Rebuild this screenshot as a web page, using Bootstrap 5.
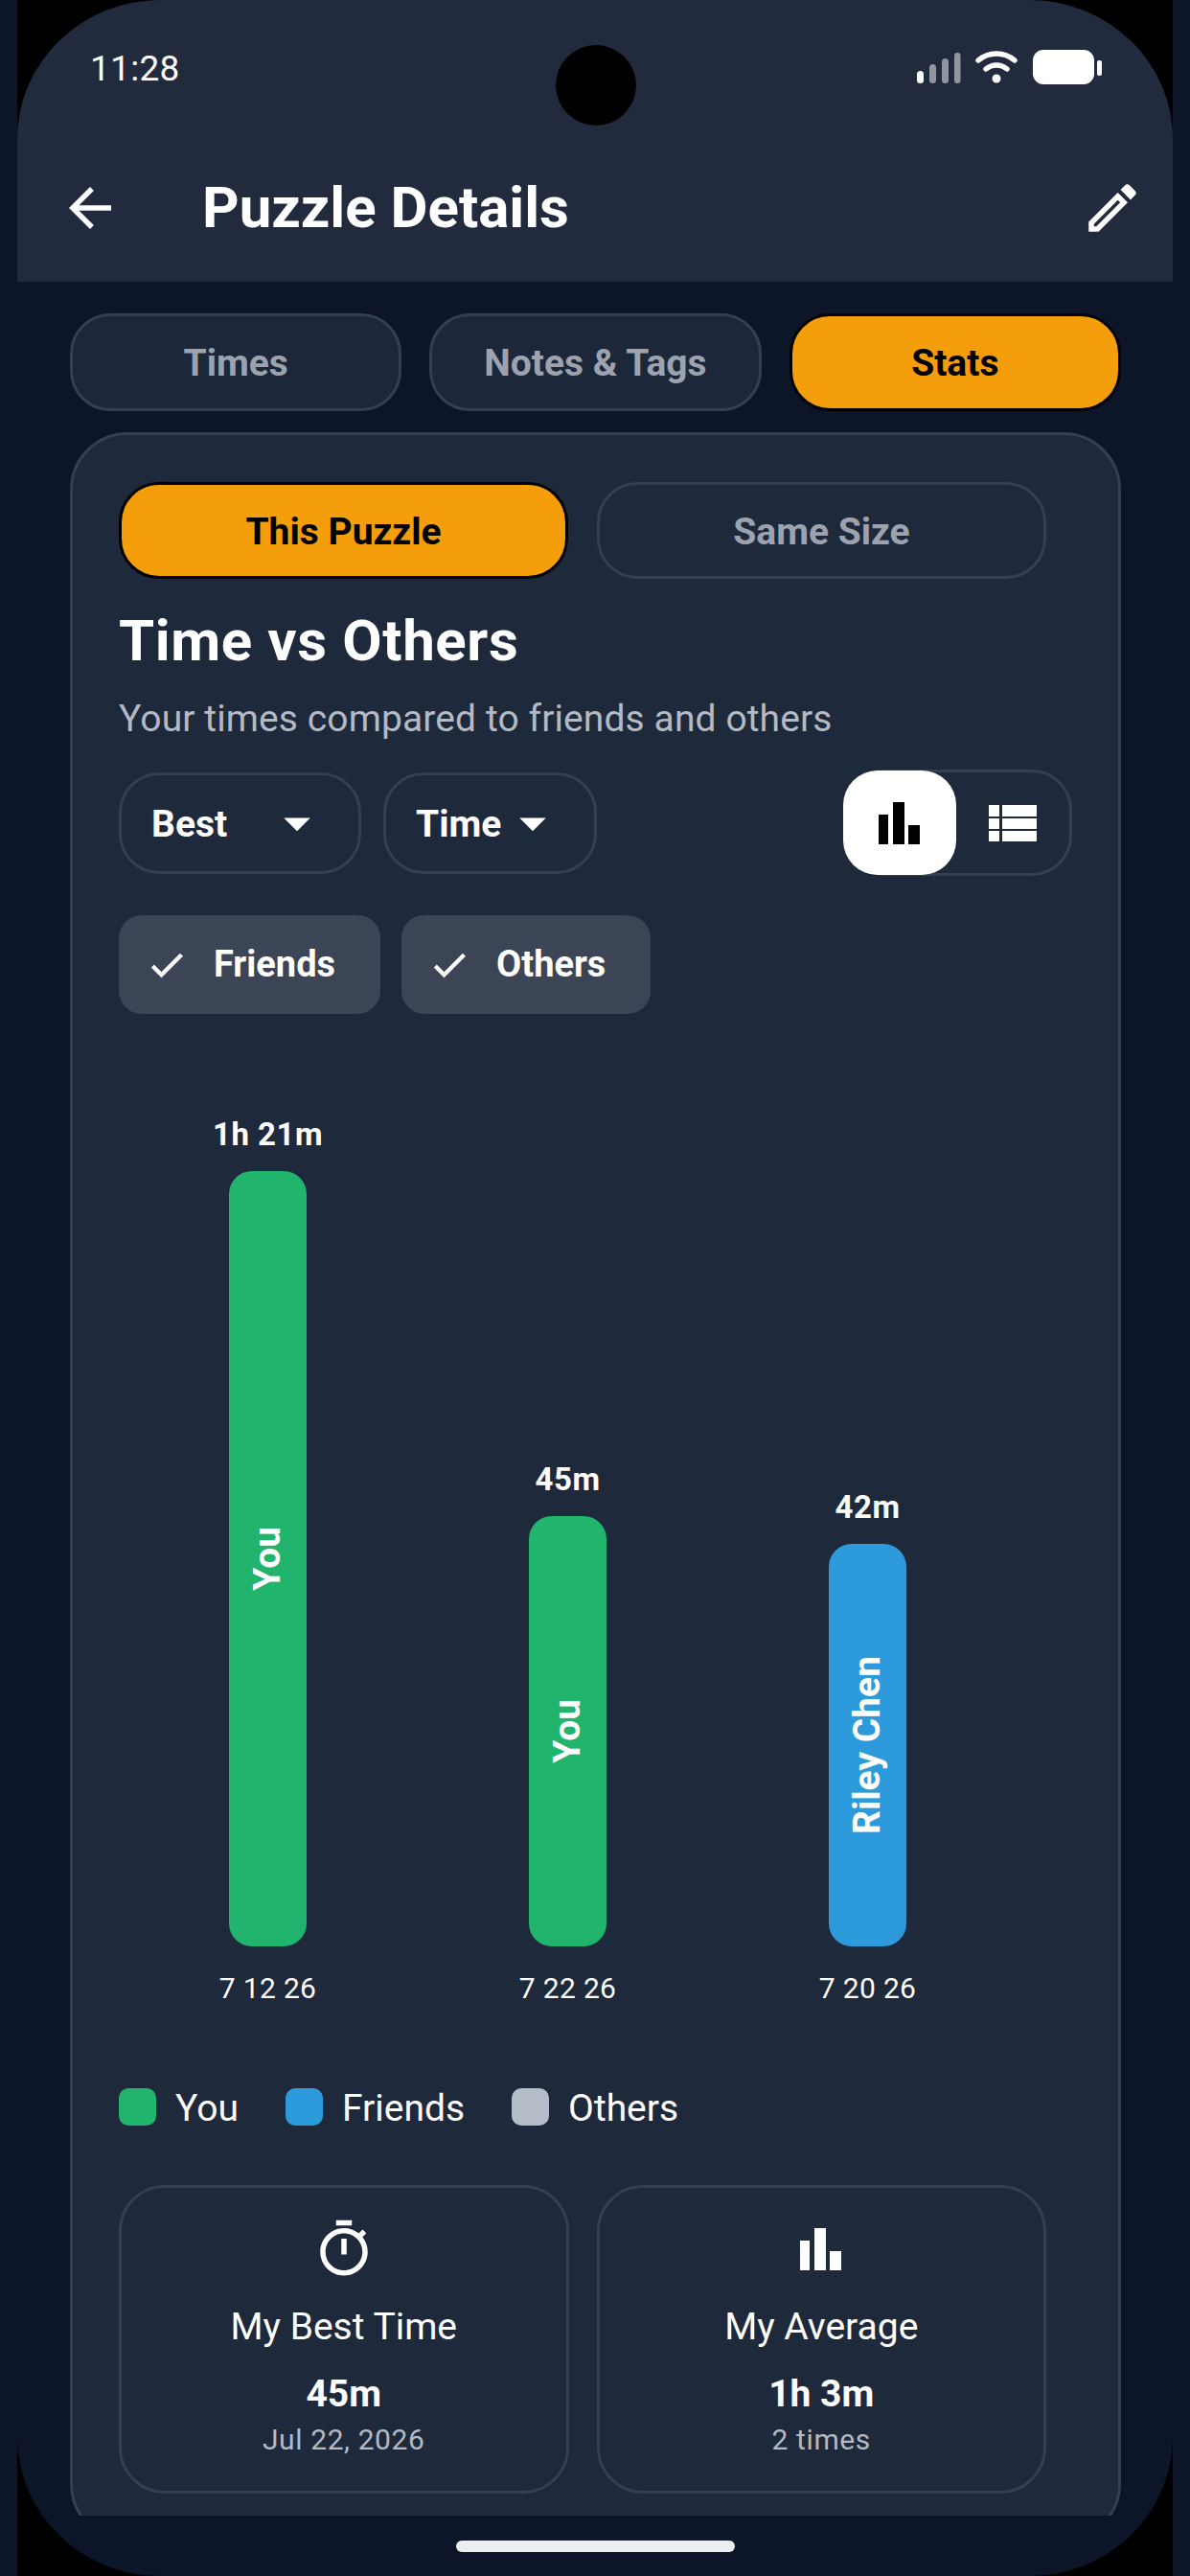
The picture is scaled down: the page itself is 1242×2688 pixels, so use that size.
<!DOCTYPE html>
<html lang="en">
<head>
    <meta charset="UTF-8">
    <title>Puzzle Details</title>
    <link href="https://cdn.jsdelivr.net/npm/bootstrap@5.3.3/dist/css/bootstrap.min.css" rel="stylesheet">
    <style>
        html, body { margin: 0; height: 2688px; background: #0d1629; overflow: hidden; }
        body { font-family: Roboto, "Liberation Sans", sans-serif; color: #fff; }
        svg { display: block; flex: none; fill: currentColor; }

        .phone-frame { margin: 0 18px; height: 2688px; background: #000; }
        .phone-screen { position: relative; height: 2688px; border-radius: 150px / 145px; overflow: hidden; background: #0d1629; }
        .camera-dot { position: absolute; top: 47px; left: 562px; width: 84px; height: 84px; border-radius: 50%; background: #000; }

        .top-header { height: 294px; background: #222a3d; }
        .status-row { height: 140px; padding: 0 74px 0 76px; }
        .clock { font-size: 37px; letter-spacing: .3px; padding-top: 3px; }
        .app-row { height: 154px; padding: 0 30px 0 43px; }
        .page-title { font-size: 60px; font-weight: 700; line-height: 70px; margin: 0 0 0 84px; }

        .content-clip { height: 2331px; overflow: hidden; padding: 33px 54px 0 55px; }
        .tab-row { gap: 29px; height: 102px; }
        .tab-pill, .seg-pill { font-size: 39px; font-weight: 700; border-radius: 42px; border: 3px solid #333f52; background: #1c2739; color: #9ca3af; padding: 3px 0 0; line-height: 1; }
        .tab-pill { flex: 1 1 0; }
        .tab-pill.is-active, .seg-pill.is-active { background: #f59e0b; border-color: #000; color: #000; }

        .stats-panel { margin-top: 22px; height: 2201px; border: 3px solid #333f52; border-radius: 60px; background: #1e293b; padding: 49px 48px 0; display: block; color: #fff; }
        .seg-row { width: 968px; gap: 30px; height: 101px; }
        .seg-pill { flex: 1 1 0; background: transparent; }
        .panel-title { font-size: 60px; font-weight: 700; line-height: 70px; margin: 30px 0 0; letter-spacing: .6px; }
        .panel-sub { font-size: 39px; line-height: 50px; margin: 21px 0 0; color: #b4bac4; letter-spacing: .1px; }

        .filter-row { margin-top: 28px; height: 111px; }
        .drop-pill { height: 106px; border: 3px solid #333f52; border-radius: 42px; padding: 0 31px; font-size: 39px; font-weight: 700; }
        .drop-text { padding-top: 3px; }
        .drop-gap { gap: 23px; }
        .best-label { min-width: 119px; }
        .view-switch { height: 111px; width: 239px; border: 3px solid #333f52; border-radius: 42px; }
        .view-on { width: 119px; height: 109px; margin: -2px 0 -2px -3px; background: #fff; color: #000; border-radius: 36px; }
        .view-off { width: 120px; }

        .chip-row { margin-top: 41px; gap: 22px; }
        .filter-chip { height: 103px; background: #3b4556; border-radius: 24px; padding: 0 47px 0 28px; font-size: 38px; font-weight: 700; gap: 27px; }
        .check-mark { stroke: currentColor; stroke-width: .5; }

        .chart-row { margin-top: 106px; margin-left: -1px; }
        .chart-col { flex: 0 0 313px; }
        .bar-value { font-size: 33px; font-weight: 700; line-height: 40px; margin-bottom: 18px; letter-spacing: .5px; }
        .chart-bar { width: 81px; border-radius: 24px; }
        .bar-you { background: #21b46d; }
        .bar-friend { background: #2d9bdb; }
        .bar-name { writing-mode: vertical-rl; transform: rotate(180deg); font-size: 39px; font-weight: 700; line-height: 1; }
        .bar-date { font-size: 30px; line-height: 40px; margin-top: 24px; letter-spacing: .35px; }

        .legend-row { margin-top: 84px; height: 39px; font-size: 39px; gap: 49px; }
        .legend-item { gap: 20px; }
        .legend-text { padding-top: 3px; }
        .legend-dot { width: 39px; height: 39px; border-radius: 10px; }
        .dot-others { background: #b4bcc8; }

        .summary-row { margin-top: 62px; width: 968px; gap: 29px; }
        .summary-box { flex: 1 1 0; height: 322px; border: 3px solid #333f52; border-radius: 48px; padding-top: 31px; }
        .summary-name { font-size: 39px; line-height: 50px; margin-top: 23px; }
        .summary-value { font-size: 39px; font-weight: 700; line-height: 46px; margin-top: 22px; }
        .summary-note { font-size: 30px; line-height: 38px; margin-top: 6px; color: #b4bac4; letter-spacing: .6px; }

        .bottom-strip { position: relative; height: 63px; background: #0d1629; }
        .home-bar { position: absolute; top: 26px; left: 458px; width: 291px; height: 12px; border-radius: 6px; background: #eceef0; }
    </style>
</head>
<body>
<div class="phone-frame">
    <div class="phone-screen">
        <div class="camera-dot"></div>

        <!-- status bar + app bar -->
        <div class="top-header">
            <div class="status-row d-flex align-items-center justify-content-between">
                <span class="clock">11:28</span>
                <svg width="193" height="36" viewBox="0 0 193 36">
                    <rect x="0" y="22" width="7" height="13" rx="3.5"/>
                    <g opacity=".5">
                        <rect x="13" y="15" width="7" height="20" rx="3.5"/>
                        <rect x="26" y="9" width="7" height="26" rx="3.5"/>
                        <rect x="39" y="3" width="6.5" height="32" rx="3.2"/>
                    </g>
                    <path d="M64 11a29 29 0 0 1 38 0" fill="none" stroke="#fff" stroke-width="5.5" stroke-linecap="round"/>
                    <path d="M72 20a17 17 0 0 1 22 0" fill="none" stroke="#fff" stroke-width="5.5" stroke-linecap="round"/>
                    <circle cx="83" cy="30" r="4.5"/>
                    <rect x="121" y="0" width="64" height="36" rx="11"/>
                    <rect x="188" y="11" width="5" height="16" rx="2"/>
                </svg>
            </div>
            <div class="app-row d-flex align-items-center">
                <svg width="66" height="66" viewBox="0 0 24 24"><path d="M20 11H7.83l5.59-5.59L12 4l-8 8 8 8 1.41-1.41L7.83 13H20v-2z"/></svg>
                <h1 class="page-title flex-grow-1">Puzzle Details</h1>
                <svg width="66" height="66" viewBox="0 0 24 24"><path d="M3 17.25V21h3.75L17.81 9.94l-3.75-3.75L3 17.25zM5.92 19H5v-.92l9.06-9.06.92.92L5.92 19zM20.71 5.63l-2.34-2.34c-.39-.39-1.02-.39-1.41 0l-1.83 1.83 3.75 3.75 1.83-1.83c.39-.39.39-1.02 0-1.41z"/></svg>
            </div>
        </div>

        <div class="content-clip">
            <div class="tab-row d-flex">
                <button class="btn tab-pill">Times</button>
                <button class="btn tab-pill">Notes &amp; Tags</button>
                <button class="btn tab-pill is-active">Stats</button>
            </div>

            <div class="card stats-panel">
                <div class="seg-row d-flex">
                    <button class="btn seg-pill is-active">This Puzzle</button>
                    <button class="btn seg-pill">Same Size</button>
                </div>

                <h2 class="panel-title">Time vs Others</h2>
                <p class="panel-sub">Your times compared to friends and others</p>

                <div class="filter-row d-flex align-items-center justify-content-between">
                    <div class="d-flex drop-gap">
                        <div class="drop-pill d-flex align-items-center">
                            <span class="drop-text best-label">Best</span>
                            <svg width="66" height="66" viewBox="0 0 24 24"><path d="M7 10l5 5 5-5z"/></svg>
                        </div>
                        <div class="drop-pill d-flex align-items-center">
                            <span class="drop-text">Time</span>
                            <svg width="66" height="66" viewBox="0 0 24 24"><path d="M7 10l5 5 5-5z"/></svg>
                        </div>
                    </div>
                    <div class="view-switch d-flex align-items-center">
                        <div class="view-on d-flex align-items-center justify-content-center">
                            <svg width="66" height="66" viewBox="0 0 66 66"><path d="M11 24h10v31H11zM26 11h12v44H26zM42 35h12v20H42z"/></svg>
                        </div>
                        <div class="view-off d-flex align-items-center justify-content-center">
                            <svg width="66" height="66" viewBox="0 0 66 66"><path d="M8 14h11v12H8zM22 14h36v12H22zM8 28h11v11H8zM22 28h36v11H22zM8 41h11v11H8zM22 41h36v11H22z"/></svg>
                        </div>
                    </div>
                </div>

                <div class="chip-row d-flex">
                    <div class="filter-chip d-flex align-items-center">
                        <svg class="check-mark" width="44" height="44" viewBox="0 0 24 24"><path d="M9 16.17L4.83 12l-1.42 1.41L9 19 21 7l-1.41-1.41z"/></svg>
                        <span>Friends</span>
                    </div>
                    <div class="filter-chip d-flex align-items-center">
                        <svg class="check-mark" width="44" height="44" viewBox="0 0 24 24"><path d="M9 16.17L4.83 12l-1.42 1.41L9 19 21 7l-1.41-1.41z"/></svg>
                        <span>Others</span>
                    </div>
                </div>

                <!-- chart: 10px per minute -->
                <div class="chart-row d-flex align-items-end">
                    <div class="chart-col d-flex flex-column align-items-center">
                        <div class="bar-value">1h 21m</div>
                        <div class="chart-bar bar-you d-flex align-items-center justify-content-center" style="height: 809px"><span class="bar-name">You</span></div>
                        <div class="bar-date">7 12 26</div>
                    </div>
                    <div class="chart-col d-flex flex-column align-items-center">
                        <div class="bar-value">45m</div>
                        <div class="chart-bar bar-you d-flex align-items-center justify-content-center" style="height: 449px"><span class="bar-name">You</span></div>
                        <div class="bar-date">7 22 26</div>
                    </div>
                    <div class="chart-col d-flex flex-column align-items-center">
                        <div class="bar-value">42m</div>
                        <div class="chart-bar bar-friend d-flex align-items-center justify-content-center" style="height: 420px"><span class="bar-name">Riley Chen</span></div>
                        <div class="bar-date">7 20 26</div>
                    </div>
                </div>

                <div class="legend-row d-flex align-items-center">
                    <div class="legend-item d-flex align-items-center"><span class="legend-dot bar-you"></span><span class="legend-text">You</span></div>
                    <div class="legend-item d-flex align-items-center"><span class="legend-dot bar-friend"></span><span class="legend-text">Friends</span></div>
                    <div class="legend-item d-flex align-items-center"><span class="legend-dot dot-others"></span><span class="legend-text">Others</span></div>
                </div>

                <div class="summary-row d-flex">
                    <div class="summary-box d-flex flex-column align-items-center">
                        <svg width="66" height="66" viewBox="0 0 24 24"><path d="M15 1H9v2h6V1zm-4 13h2V8h-2v6zm8.03-6.61l1.42-1.42c-.43-.51-.9-.99-1.41-1.41l-1.42 1.42C16.07 4.74 14.12 4 12 4c-4.97 0-9 4.03-9 9s4.02 9 9 9 9-4.03 9-9c0-2.12-.74-4.07-1.97-5.61zM12 20c-3.87 0-7-3.13-7-7s3.13-7 7-7 7 3.13 7 7-3.13 7-7 7z"/></svg>
                        <div class="summary-name">My Best Time</div>
                        <div class="summary-value">45m</div>
                        <div class="summary-note">Jul 22, 2026</div>
                    </div>
                    <div class="summary-box d-flex flex-column align-items-center">
                        <svg width="66" height="66" viewBox="0 0 66 66"><path d="M11 24h10v31H11zM26 11h12v44H26zM42 35h12v20H42z"/></svg>
                        <div class="summary-name">My Average</div>
                        <div class="summary-value">1h 3m</div>
                        <div class="summary-note">2 times</div>
                    </div>
                </div>
            </div>
        </div>

        <div class="bottom-strip"><div class="home-bar"></div></div>
    </div>
</div>
<script src="https://cdn.jsdelivr.net/npm/bootstrap@5.3.3/dist/js/bootstrap.bundle.min.js"></script>
</body>
</html>
